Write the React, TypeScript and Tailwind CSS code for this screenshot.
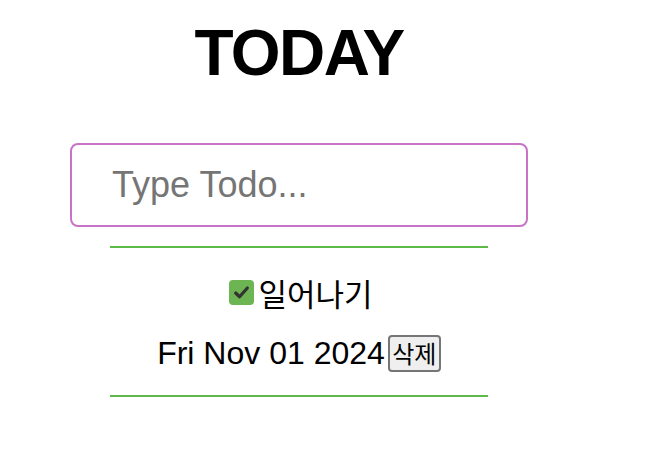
export default function App() {
  return (
    <div className="w-[598px] flex flex-col items-center bg-white text-black font-['Liberation_Sans',Arial,sans-serif]">
      <h1 className="mt-[21px] text-[64px] leading-none font-bold tracking-[-0.025em]">TODAY</h1>

      <input
        type="text"
        placeholder="Type Todo..."
        className="mt-[58px] w-[458px] h-[84px] rounded-lg border-2 border-[#c774c6] pl-[40px] text-[36px] outline-none placeholder:text-[#757575]"
      />

      <ul className="mt-[19px] w-[378px] border-y-2 border-[#5dba49] flex flex-col items-center">
        <li className="mt-[26px] h-[36px] flex items-center gap-[4px] pl-[4px]">
          <span className="w-[25px] h-[25px] rounded-[4px] bg-[#6cb552] flex items-center justify-center">
            <svg width="17" height="17" viewBox="0 0 16 16">
              <path d="M2.5 8.5 L6.2 12 L13.5 3.8" fill="none" stroke="#333" strokeWidth="3" strokeLinecap="round" strokeLinejoin="round" />
            </svg>
          </span>
          <span className="text-[31px] font-['Noto_Sans_CJK_KR',sans-serif] leading-none">일어나기</span>
        </li>
        <li className="mt-[25px] mb-[24px] h-[36px] flex items-center">
          <span className="text-[32px] leading-none">Fri Nov 01 2024</span>
          <button className="ml-[3px] w-[53px] h-[37px] rounded-[4px] border-2 border-[#767676] bg-[#efefef] text-[24px] leading-none font-['Noto_Sans_CJK_KR',sans-serif]">
            삭제
          </button>
        </li>
      </ul>
    </div>
  )
}
